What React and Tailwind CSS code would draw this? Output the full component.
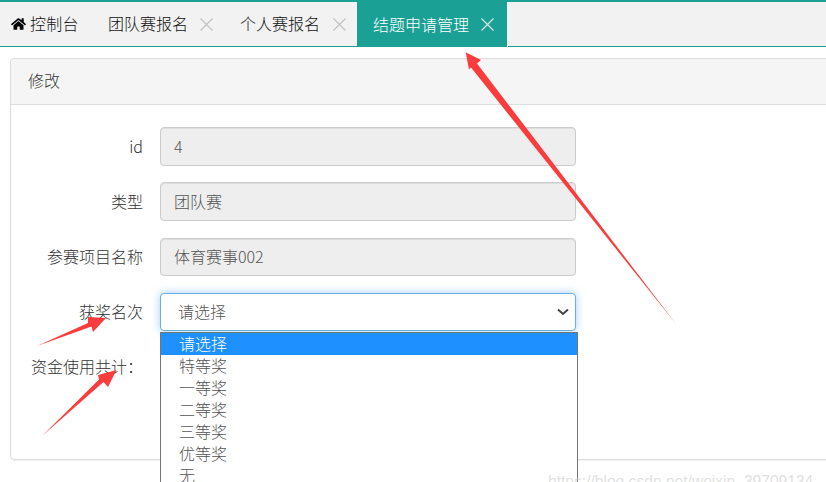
import React from "react";
import { FaHome } from "react-icons/fa";

const font = { cjk: "font-['Noto_Sans_CJK_SC','Liberation_Sans',sans-serif]" };

function CloseIcon({ className }) {
  return (
    <svg width="13" height="13" viewBox="0 0 13 13" className={className}>
      <path d="M0.5 0.5L12.5 12.5M12.5 0.5L0.5 12.5" stroke="currentColor" strokeWidth="1.2" fill="none" />
    </svg>
  );
}

// 顶部标签页
function Tabs() {
  return (
    <div className="flex h-[44px] border-t-2 border-b border-[#1aa094] bg-[#f2f2f2] box-content text-[16px] text-[#111] font-light">
      <div className="flex items-center w-[92px] pl-[11px]">
        <FaHome className="w-[15px] h-[14px] mr-1 text-black" />
        <span className="pb-[2px] tracking-[0.3px]">控制台</span>
      </div>
      <div className="flex items-center w-[132px] pl-4">
        <span className="pb-[2px]">团队赛报名</span>
        <CloseIcon className="ml-3 text-[#c2c2c2]" />
      </div>
      <div className="flex items-center w-[133px] pl-4">
        <span className="pb-[2px]">个人赛报名</span>
        <CloseIcon className="ml-[13px] text-[#c2c2c2]" />
      </div>
      <div className="flex items-center w-[150px] h-[45px] pl-4 bg-[#1aa094] text-white">
        <span className="pb-[2px]">结题申请管理</span>
        <CloseIcon className="ml-3 text-[#d5e8e5]" />
      </div>
      <div className="w-px h-[45px] bg-[#f4fafa]" />
    </div>
  );
}

function Row({ label, className = "", children }) {
  return (
    <div className={`flex items-center ${className}`}>
      <label className="w-[132px] shrink-0 pb-[2px] text-right text-[#333] font-light">{label}</label>
      <div className="ml-[17px] w-[416px] relative">{children}</div>
    </div>
  );
}

function ReadOnlyInput({ value, className }) {
  return (
    <input
      readOnly
      value={value}
      className={`block w-full pl-[13px] pb-[2px] bg-[#eee] border border-[#ccc] rounded text-[16px] text-[#555] font-light shadow-[inset_0_1px_1px_rgba(0,0,0,0.075)] outline-none ${className}`}
    />
  );
}

const options = ["请选择", "特等奖", "一等奖", "二等奖", "三等奖", "优等奖", "无"];

function SelectOpen() {
  return (
    <>
      <div className="flex items-center justify-between h-[38px] pl-[17px] pr-[6px] bg-white border border-[#66afe9] rounded text-[#555] font-light shadow-[0_0_8px_rgba(102,175,233,0.6)]">
        <span className="pb-[2px]">请选择</span>
        <svg width="12" height="8" viewBox="0 0 12 8">
          <path d="M1 1.5L6 6L11 1.5" stroke="#444" strokeWidth="2" fill="none" />
        </svg>
      </div>
      <ul className="absolute left-0 top-[39px] w-[418px] h-[170px] bg-white border border-[#767676] border-b-0 text-[#555] font-light z-10">
        {options.map((o, i) => (
          <li key={o} className={i === 0 ? "h-[22px] leading-[21px] pl-[18px] bg-[#1e90ff] text-white" : "h-[22px] leading-[21px] pl-[18px]"}>
            {o}
          </li>
        ))}
      </ul>
    </>
  );
}

// 红色箭头标注
function Arrows() {
  return (
    <svg width="826" height="482" viewBox="0 0 826 482" className="absolute left-0 top-0 z-20 pointer-events-none">
      <polygon points="465.7,52.3 481,60 477,63.5 676,324 471,67.5 469,69.5" fill="#fb3c3c" />
      <polygon points="106,318 93,332 91.5,326.5 37,346 88,323 88,317" fill="#fb3c3c" />
      <polygon points="116.5,370 108,387 103.5,382 42,436 99,379.5 98,375" fill="#fb3c3c" />
    </svg>
  );
}

export default function App() {
  return (
    <div className={`relative w-[826px] h-[482px] overflow-hidden bg-white text-[16px] ${font.cjk}`}>
      <Tabs />
      <div className="mt-[11px] ml-[10px] w-[900px] h-[402px] border border-[#ddd] rounded shadow-[0_1px_1px_rgba(0,0,0,0.05)]">
        <div className="flex items-center h-[46px] pl-[17px] pb-[3px] bg-[#f5f5f5] border-b border-[#ddd] rounded-t text-[#333] font-light">修改</div>
        <div className="pt-[22px]">
          <Row label="id">
            <ReadOnlyInput value="4" className="h-[39px]" />
          </Row>
          <Row label="类型" className="mt-4">
            <ReadOnlyInput value="团队赛" className="h-[39px]" />
          </Row>
          <Row label="参赛项目名称" className="mt-[17px]">
            <ReadOnlyInput value="体育赛事002" className="h-[38px]" />
          </Row>
          <Row label="获奖名次" className="mt-[17px]">
            <SelectOpen />
          </Row>
          <div className="mt-[17px] flex items-center h-[38px]">
            <label className="w-[132px] shrink-0 pb-[2px] text-right text-[#333] font-light whitespace-nowrap">资金使用共计：</label>
          </div>
        </div>
      </div>
      <Arrows />
      <span className="absolute left-[548px] top-[472px] z-30 text-[15.6px] leading-[20px] text-[#ccc]/60 font-['Liberation_Sans',sans-serif] whitespace-nowrap">
        https://blog.csdn.net/weixin_39709134
      </span>
    </div>
  );
}
